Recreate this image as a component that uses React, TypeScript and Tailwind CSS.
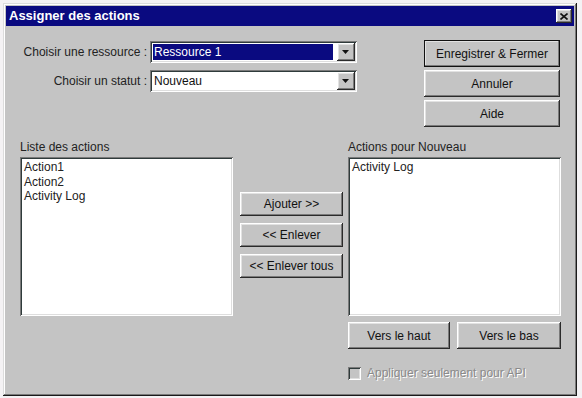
import React from 'react';

const raised =
  'shadow-[inset_-1px_-1px_0_#2a2a2a,inset_1px_1px_0_#ffffff,inset_-2px_-2px_0_#7a7a7a,inset_2px_2px_0_#e2e2e2]';
const sunken =
  'shadow-[inset_1px_1px_0_#7a7a7a,inset_-1px_-1px_0_#ffffff,inset_2px_2px_0_#2f3b3b,inset_-2px_-2px_0_#dedede]';

function Btn({ children, className = '' }: { children: React.ReactNode; className?: string }) {
  return (
    <button
      className={`flex items-center justify-center bg-[#c4c4c4] text-[12px] text-[#111] ${raised} ${className}`}
    >
      {children}
    </button>
  );
}

function Combo({ value, selected }: { value: string; selected?: boolean }) {
  return (
    <div className={`flex h-[22px] w-[207px] items-center bg-white pl-[3px] pr-[2px] ${sunken}`}>
      <div
        className={`flex h-[16px] flex-1 items-center pl-[1px] text-[12px] ${
          selected ? 'bg-[#0a0a80] text-white' : 'text-[#111]'
        }`}
      >
        {value}
      </div>
      <div className={`ml-[4px] flex h-[18px] w-[18px] items-center justify-center bg-[#c4c4c4] ${raised}`}>
        <svg width="8" height="5" viewBox="0 0 8 5">
          <path d="M0 0h7L3.5 4z" fill="#111" />
        </svg>
      </div>
    </div>
  );
}

function ListBox({ items }: { items: string[] }) {
  return (
    <div className={`h-[159px] w-[213px] bg-white px-[4px] pt-[3px] ${sunken}`}>
      {items.map(item => (
        <div key={item} className="text-[12px] leading-[14.5px] text-[#222]">
          {item}
        </div>
      ))}
    </div>
  );
}

export default function App() {
  return (
    <div className="h-[398px] w-[582px] bg-[#f4f2f4] p-[3px] font-['Liberation_Sans',Arial,sans-serif]">
      {/* Dialog window */}
      <div className="flex h-[393px] w-[574px] flex-col bg-[#c4c4c4] p-[3px] shadow-[inset_-1px_-1px_0_#1a1a1a,inset_1px_1px_0_#dcdcdc,inset_-2px_-2px_0_#7a7a7a,inset_2px_2px_0_#ffffff]">
        {/* Title bar */}
        <div className="flex h-[20px] items-center justify-between bg-[#0a0a80] pl-[3px] pr-[2px]">
          <span className="text-[13px] font-bold text-white">Assigner des actions</span>
          <div className={`flex h-[14px] w-[16px] items-center justify-center bg-[#c4c4c4] ${raised}`}>
            <svg width="8" height="7" viewBox="0 0 8 7">
              <path d="M0.5 0.5L7.5 6.5M7.5 0.5L0.5 6.5" stroke="#111" strokeWidth="1.6" />
            </svg>
          </div>
        </div>

        {/* Content */}
        <div className="flex flex-1 flex-col pl-[14px] pr-[13px] pt-[14px]">
          {/* Top section */}
          <div className="flex items-start justify-between">
            <div className="mt-[1px] grid grid-cols-[127px_207px] items-center gap-x-[3px] gap-y-[7px]">
              <span className="text-right text-[12px] text-[#222]">Choisir une ressource :</span>
              <Combo value="Ressource 1" selected />
              <span className="text-right text-[12px] text-[#222]">Choisir un statut :</span>
              <Combo value="Nouveau" />
            </div>
            <div className="mr-[1px] flex w-[136px] flex-col gap-[3px]">
              <Btn className="h-[27px] outline outline-1 outline-[#111] -outline-offset-1">Enregistrer &amp; Fermer</Btn>
              <Btn className="h-[27px]">Annuler</Btn>
              <Btn className="h-[27px]">Aide</Btn>
            </div>
          </div>

          {/* Lists section */}
          <div className="mt-[13px] flex">
            <div className="flex w-[213px] flex-col">
              <span className="h-[14px] text-[12px] leading-[14px] text-[#222]">Liste des actions</span>
              <div className="mt-[3px]">
                <ListBox items={['Action1', 'Action2', 'Activity Log']} />
              </div>
            </div>

            <div className="ml-[7px] mt-[52px] flex w-[103px] flex-col gap-[7px]">
              <Btn className="h-[24px]">Ajouter &gt;&gt;</Btn>
              <Btn className="h-[24px]">&lt;&lt; Enlever</Btn>
              <Btn className="h-[24px]">&lt;&lt; Enlever tous</Btn>
            </div>

            <div className="ml-[5px] flex w-[213px] flex-col">
              <span className="h-[14px] text-[12px] leading-[14px] text-[#222]">Actions pour Nouveau</span>
              <div className="mt-[3px]">
                <ListBox items={['Activity Log']} />
              </div>
              <div className="mt-[6px] flex justify-between">
                <Btn className="h-[27px] w-[102px]">Vers le haut</Btn>
                <Btn className="h-[27px] w-[104px]">Vers le bas</Btn>
              </div>
              <div className="mt-[15px] flex items-center gap-[6px]">
                <div className={`h-[13px] w-[13px] bg-[#c4c4c4] ${sunken}`} />
                <span className="text-[12px] text-[#8a8a8a] [text-shadow:1px_1px_0_#ffffff]">
                  Appliquer seulement pour API
                </span>
              </div>
            </div>
          </div>
        </div>
      </div>
    </div>
  );
}
